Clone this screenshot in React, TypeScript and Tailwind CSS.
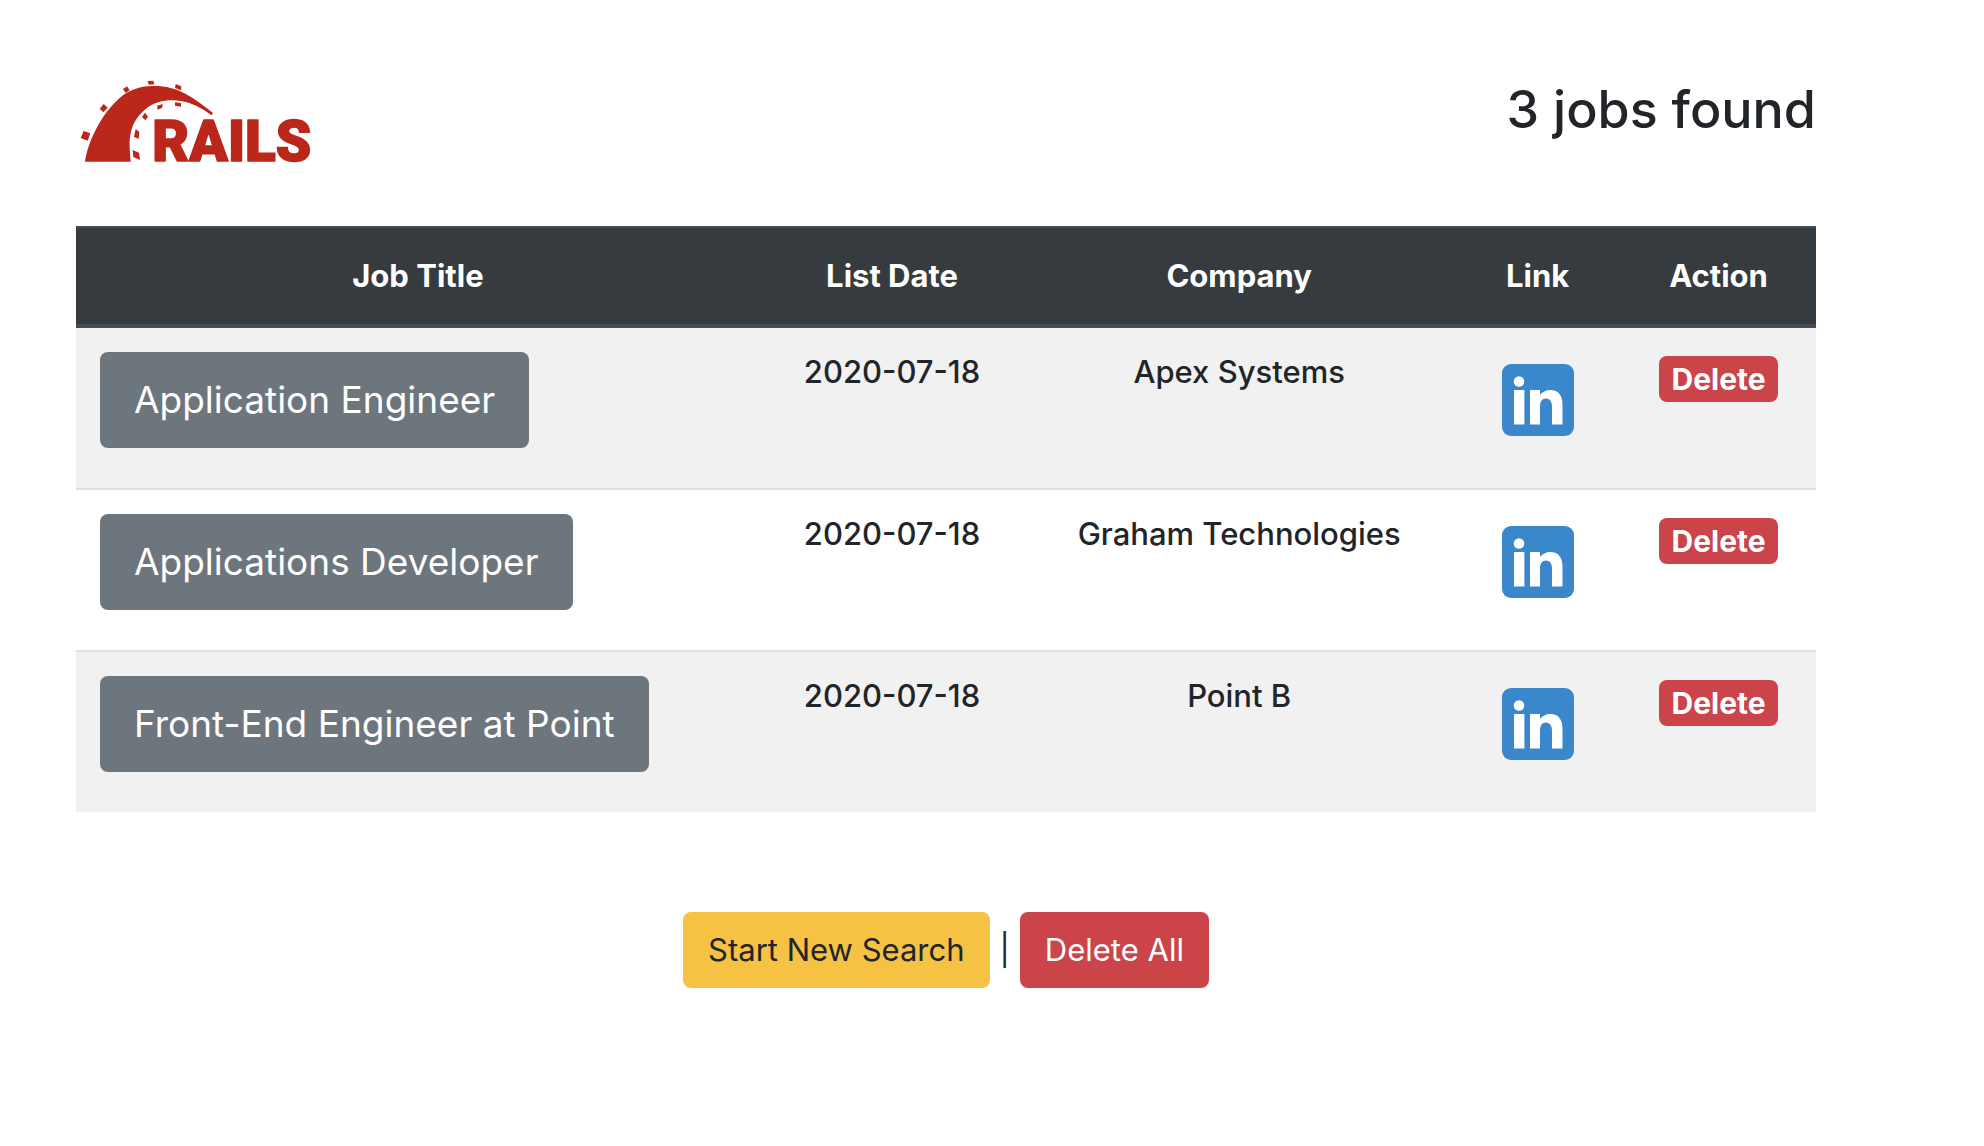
const jobs = [
  { title: "Application Engineer", date: "2020-07-18", company: "Apex Systems" },
  { title: "Applications Developer", date: "2020-07-18", company: "Graham Technologies" },
  { title: "Front-End Engineer at Point", date: "2020-07-18", company: "Point B" },
];

const columns = [
  { label: "Job Title", width: "w-[39.3%]" },
  { label: "List Date", width: "w-[15.2%]" },
  { label: "Company", width: "w-[24.7%]" },
  { label: "Link", width: "w-[9.6%]" },
  { label: "Action", width: "w-[11.2%]" },
];

function RailsLogo() {
  return (
    <svg viewBox="48 60 750 300" className="h-[100px] w-[250px]" fill="#bb271a" role="img" aria-label="Rails">
      <path d="M75 305C84 240 130 152 186 108C216 86 248 77 284 78C316 78 348 86 376 101C408 118 436 141 459 159L454 166C424 143 396 129 366 124C330 117 290 121 258 146C222 174 207 212 209 262Q210 285 212 305Z" />
      <path d="M71 213L91 220L83 242L62 234Z" />
      <path d="M131 132L143 143L130 157L119 146Z" />
      <path d="M201 79L209 91L197 99L189 87Z" />
      <path d="M263 63L280 62L283 73L266 74Z" />
      <path d="M347 72L364 79L363 91L345 84Z" />
      <path d="M345 127L363 129L363 140L345 137Z" />
      <path d="M291 137L308 132L307 143L293 149Z" />
      <path d="M255 158L264 170L256 181L246 171Z" />
      <path d="M227 207L238 216L236 237L222 230Z" />
      <path d="M218 270L237 278L240 300L220 291Z" />
      <text
        x="277"
        y="303"
        fontFamily="Roboto, sans-serif"
        fontWeight="900"
        fontSize="170"
        stroke="#bb271a"
        strokeWidth="5"
        strokeLinejoin="round"
      >
        RAILS
      </text>
    </svg>
  );
}

function LinkedInIcon() {
  return (
    <svg viewBox="0 0 72 72" className="size-[72px]" aria-hidden="true">
      <rect width="72" height="72" rx="9" fill="#3a87cb" />
      <g fill="#fff">
        <circle cx="17" cy="17.5" r="5.3" />
        <path d="M12 26H22.4V60.5H12Z" />
        <path d="M28 26H38V31C40 28 44 26 48 26C57 26 60.5 32 60.5 41V60.5H50V43C50 38 48 34.5 44 34.5C40 34.5 38 38 38 42V60.5H28Z" />
      </g>
    </svg>
  );
}

export default function App() {
  return (
    <main className="min-h-screen bg-white pt-20 pr-[168px] pb-20 pl-[76px] font-[Inter,sans-serif] text-[#212529]">
      <header className="flex items-start justify-between">
        <RailsLogo />
        <h1 className="text-[52px] leading-[60px] font-medium">3 jobs found</h1>
      </header>

      <table className="mt-[46px] w-full table-fixed border-separate border-spacing-0 text-[31px] leading-[48px]">
        <thead>
          <tr className="bg-[#363b3f] text-white">
            {columns.map((column) => (
              <th
                key={column.label}
                scope="col"
                className={`${column.width} border-t-2 border-b-4 border-[#464c55] py-6 text-center font-bold`}
              >
                {column.label}
              </th>
            ))}
          </tr>
        </thead>
        <tbody>
          {jobs.map((job) => (
            <tr
              key={job.title}
              className="text-center align-top font-medium odd:bg-[#f1f1f1] [&:not(:first-child)>td]:border-t-2 [&>td]:border-[#dee2e6]"
            >
              <td className="px-6 pt-6 pb-10 text-left">
                <button className="block h-24 rounded-lg bg-[#6d757d] px-[34px] text-[37px] leading-[60px] font-normal whitespace-nowrap text-white">
                  {job.title}
                </button>
              </td>
              <td className="pt-5">{job.date}</td>
              <td className="pt-5">{job.company}</td>
              <td className="pt-9">
                <a href="#" aria-label={`${job.title} on LinkedIn`} className="inline-block align-top">
                  <LinkedInIcon />
                </a>
              </td>
              <td className="pt-7">
                <button className="mx-auto block h-[46px] rounded-lg bg-[#cb444a] px-3 text-[30px] leading-[46px] font-bold text-white">
                  Delete
                </button>
              </td>
            </tr>
          ))}
        </tbody>
      </table>

      <div className="mt-[100px] flex items-center justify-center gap-[10px] text-[31px] leading-[48px]">
        <button className="h-[76px] rounded-lg bg-[#f6c244] px-[25px]">Start New Search</button>
        <span>|</span>
        <button className="h-[76px] rounded-lg bg-[#cb444a] px-[25px] text-white">Delete All</button>
      </div>
    </main>
  );
}
